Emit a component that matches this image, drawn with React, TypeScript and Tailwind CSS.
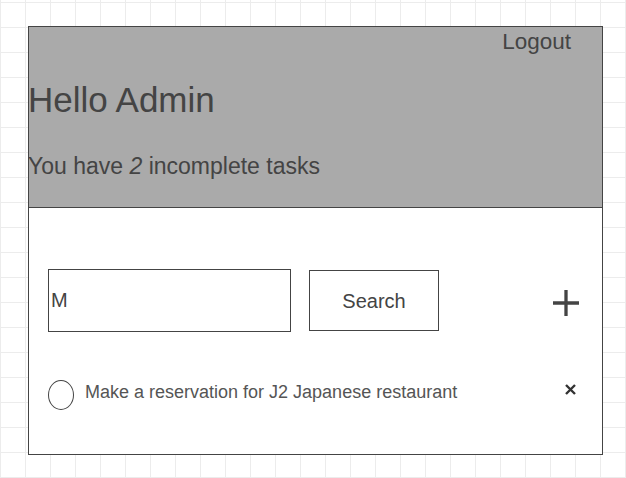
import React from "react";

const font = { fontFamily: '"Liberation Sans", Arial, sans-serif' };

function PlusIcon() {
  return (
    <svg width="26" height="26" viewBox="0 0 26 26" className="block">
      <path d="M13 0 V26 M0 13 H26" stroke="#444" strokeWidth="3.3" fill="none" />
    </svg>
  );
}

function CloseIcon() {
  return (
    <svg width="11" height="11" viewBox="0 0 11 11" className="block">
      <path d="M1 1 L10 10 M10 1 L1 10" stroke="#333" strokeWidth="2.4" fill="none" />
    </svg>
  );
}

export default function App() {
  return (
    <div
      style={font}
      className="h-[478px] w-full bg-white bg-[linear-gradient(to_right,#ececec_1px,transparent_1px),linear-gradient(to_bottom,#ececec_1px,transparent_1px)] bg-[size:25px_25px] bg-[position:0px_2px] pl-[28px] pt-[26px] text-[#444]"
    >
      <div className="flex h-[429px] w-[575px] flex-col border border-[#444] bg-white">
        <header className="flex h-[181px] flex-col border-b border-[#444] bg-[#aaa]">
          <button className="mt-[2px] mr-[31px] self-end text-[22.5px] leading-[26px] text-[#444]">
            Logout
          </button>
          <h1 className="-ml-[1px] mt-[25px] text-[35px] leading-[40px] font-normal">Hello Admin</h1>
          <p className="-ml-[1px] mt-[33px] text-[23px] leading-[26px]">
            You have <em>2</em> incomplete tasks
          </p>
        </header>

        <main className="flex flex-col pl-[19px] pr-[23px] pt-[61px]">
          <div className="flex items-center">
            <input
              readOnly
              value="M"
              className="h-[63px] w-[243px] border border-[#444] bg-white pl-[2px] text-[20px] text-[#444] outline-none"
            />
            <button className="ml-[18px] h-[61px] w-[130px] border border-[#444] bg-white text-[20px] text-[#444]">
              Search
            </button>
            <button className="ml-auto mt-[5px]">
              <PlusIcon />
            </button>
          </div>

          <div className="mt-[48px] flex items-center">
            <span className="h-[30px] w-[26px] shrink-0 rounded-[50%] border border-[#444]" />
            <span className="ml-[11px] -mt-[7px] text-[18px] leading-[22px] text-[#555]">
              Make a reservation for J2 Japanese restaurant
            </span>
            <button className="ml-auto mr-[3px] -mt-[12px]">
              <CloseIcon />
            </button>
          </div>
        </main>
      </div>
    </div>
  );
}
